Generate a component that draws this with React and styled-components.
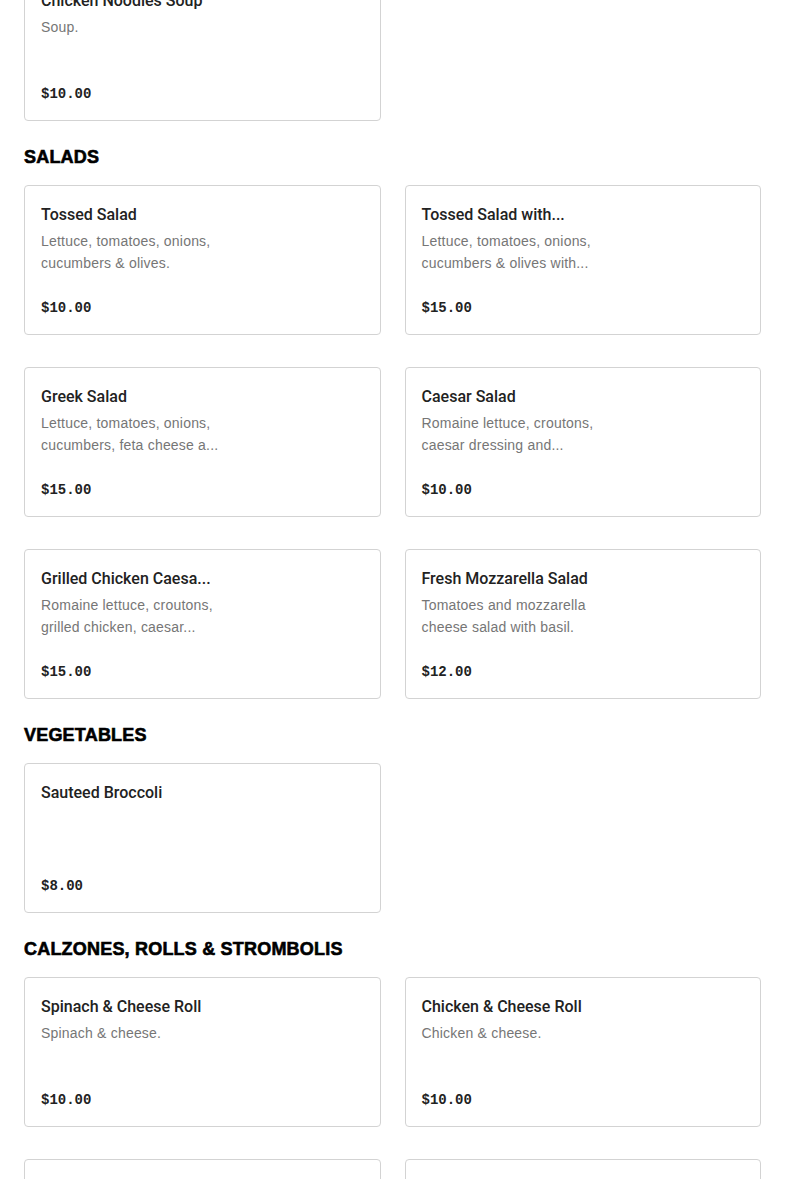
import React from 'react'
import styled, { createGlobalStyle } from 'styled-components';

const GlobalStyle = createGlobalStyle`
  body {
    margin: 0;
    background: #fff;
    font-family: "Liberation Sans", Arial, sans-serif;
    color: #222;
  }
`;

// page is shown scrolled a little, so the soup card is cut at the top
const Page = styled.div`
  padding: 0 24px;
  margin-top: -29px;
  display: flex;
  flex-direction: column;
`;

const Section = styled.section`
  display: flex;
  flex-direction: column;
  margin-bottom: 24px;
`;

const SectionTitle = styled.h2`
  margin: 0 0 16px;
  font-family: "Liberation Sans", Arial, sans-serif;
  font-weight: 700;
  font-size: 18px;
  line-height: 24px;
  letter-spacing: 0.2px;
  -webkit-text-stroke: 0.6px #000;
  color: #000;
  text-transform: uppercase;
`;

const Grid = styled.div`
  display: grid;
  grid-template-columns: 1fr 1fr;
  column-gap: 24px;
  row-gap: 32px;
`;

const Card = styled.div`
  box-sizing: border-box;
  height: 150px;
  border: 1px solid #d3d3d3;
  border-radius: 4px;
  padding: 17px 16px 16px;
  display: flex;
  flex-direction: column;
  background: #fff;
`;

const ItemName = styled.div`
  font-family: Roboto, "Liberation Sans", sans-serif;
  font-weight: 500;
  font-size: 16px;
  line-height: 24px;
  color: #222;
  white-space: nowrap;
  margin-bottom: 3px;
`;

const ItemDesc = styled.div`
  font-size: 14px;
  line-height: 22px;
  letter-spacing: 0.2px;
  color: #767676;
  max-width: 180px;
`;

const Price = styled.div`
  margin-top: auto;
  font-family: "Liberation Mono", "Courier New", monospace;
  font-weight: 700;
  font-size: 14px;
  line-height: 20px;
  color: #222;
`;

const menu = [
  {
    title: null,
    items: [
      { name: 'Chicken Noodles Soup', desc: 'Soup.', price: '$10.00' },
    ],
  },
  {
    title: 'Salads',
    items: [
      { name: 'Tossed Salad', desc: ['Lettuce, tomatoes, onions,', 'cucumbers & olives.'], price: '$10.00' },
      { name: 'Tossed Salad with...', desc: ['Lettuce, tomatoes, onions,', 'cucumbers & olives with...'], price: '$15.00' },
      { name: 'Greek Salad', desc: ['Lettuce, tomatoes, onions,', 'cucumbers, feta cheese a...'], price: '$15.00' },
      { name: 'Caesar Salad', desc: ['Romaine lettuce, croutons,', 'caesar dressing and...'], price: '$10.00' },
      { name: 'Grilled Chicken Caesa...', desc: ['Romaine lettuce, croutons,', 'grilled chicken, caesar...'], price: '$15.00' },
      { name: 'Fresh Mozzarella Salad', desc: ['Tomatoes and mozzarella', 'cheese salad with basil.'], price: '$12.00' },
    ],
  },
  {
    title: 'Vegetables',
    items: [
      { name: 'Sauteed Broccoli', desc: null, price: '$8.00' },
    ],
  },
  {
    title: 'Calzones, Rolls & Strombolis',
    items: [
      { name: 'Spinach & Cheese Roll', desc: 'Spinach & cheese.', price: '$10.00' },
      { name: 'Chicken & Cheese Roll', desc: 'Chicken & cheese.', price: '$10.00' },
      { name: 'Sausage & Pepper Roll', desc: 'Sausage & peppers.', price: '$10.00' },
      { name: 'Stromboli', desc: 'Ham, salami & cheese.', price: '$12.00' },
    ],
  },
];

function Desc({ text }) {
  if (!text) return null;
  const lines = Array.isArray(text) ? text : [text];
  return (
    <ItemDesc>
      {lines.map((line, i) => (
        <React.Fragment key={i}>
          {i > 0 && <br />}
          {line}
        </React.Fragment>
      ))}
    </ItemDesc>
  );
}

function App() {
  return (
    <>
      <GlobalStyle />
      <Page>
        {menu.map((section, i) => (
          <Section key={i}>
            {section.title && <SectionTitle>{section.title}</SectionTitle>}
            <Grid>
              {section.items.map(item => (
                <Card key={item.name}>
                  <ItemName>{item.name}</ItemName>
                  <Desc text={item.desc} />
                  <Price>{item.price}</Price>
                </Card>
              ))}
            </Grid>
          </Section>
        ))}
      </Page>
    </>
  );
}

export default App;
